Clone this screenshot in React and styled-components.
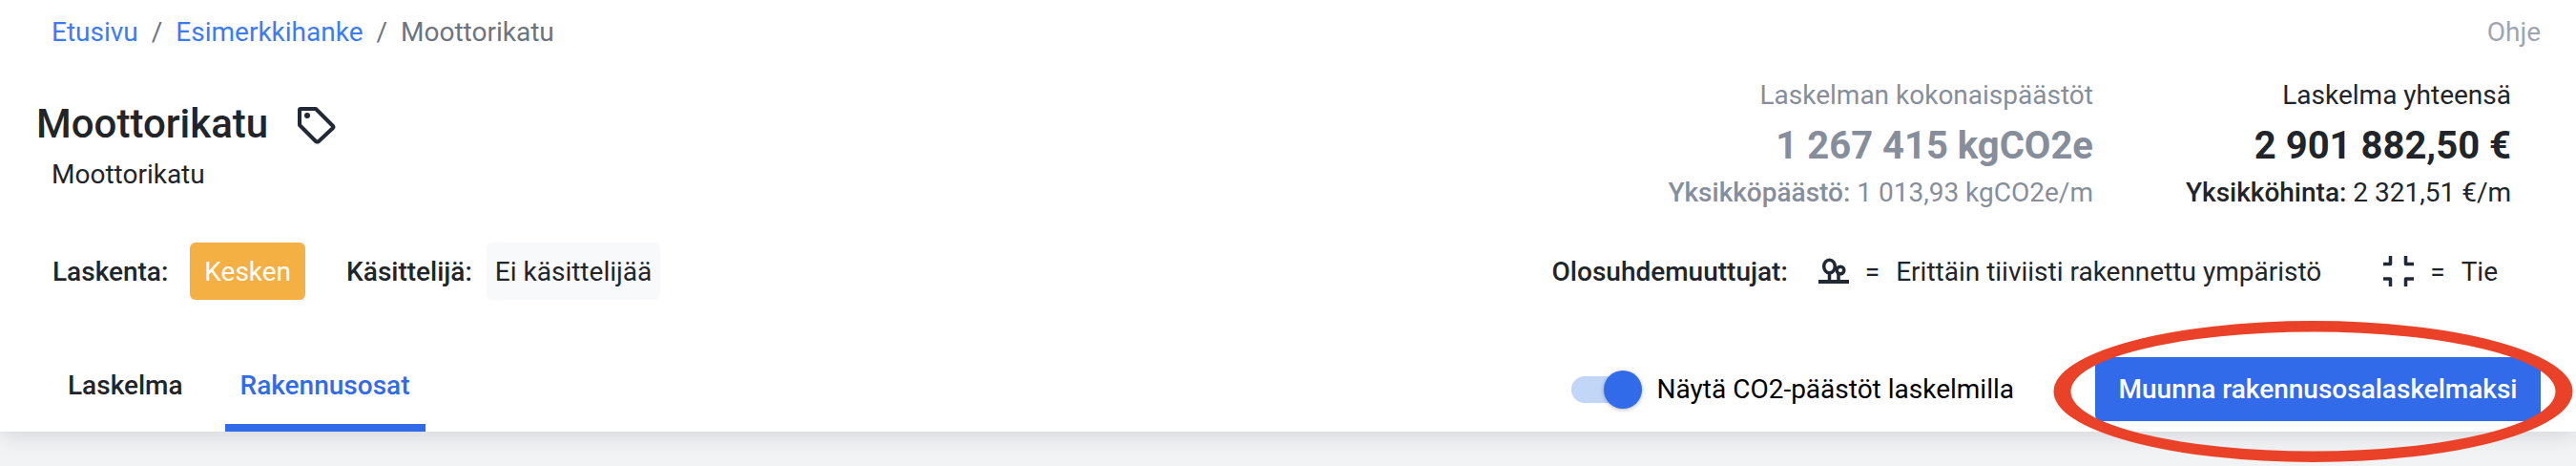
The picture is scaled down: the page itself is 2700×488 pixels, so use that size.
import React from 'react';
import styled, { createGlobalStyle } from 'styled-components';

const GlobalStyle = createGlobalStyle`
  html, body {
    margin: 0;
    padding: 0;
    background-color: #f2f3f5;
    font-family: Roboto, "Liberation Sans", sans-serif;
    color: #212529;
  }
`;

const Page = styled.div`
  position: relative;
  width: 2700px;
  height: 488px;
  overflow: hidden;
`;

const Header = styled.header`
  height: 452px;
  background-color: #fff;
  box-shadow: 0 2px 22px rgba(30, 35, 50, 0.16);
  display: flex;
  flex-direction: column;
`;

const TopBar = styled.div`
  height: 66px;
  padding: 0 37px 0 54px;
  display: flex;
  align-items: center;
  justify-content: space-between;
  font-size: 28px;
`;

const Crumbs = styled.nav`
  display: flex;
  align-items: center;
`;

const CrumbLink = styled.a`
  color: #3b7cf6;
`;

const CrumbSep = styled.span`
  color: #6c757d;
  padding: 0 14px;
`;

const CrumbCurrent = styled.span`
  color: #6c757d;
`;

const Help = styled.span`
  color: #9ea5b0;
`;

const Summary = styled.div`
  height: 174px;
  display: flex;
  justify-content: space-between;
  padding: 0 68px 0 38px;
`;

const TitleBlock = styled.div`
  padding-top: 40px;
`;

const TitleRow = styled.div`
  display: flex;
  align-items: center;
  gap: 29px;
  height: 48px;
`;

const Title = styled.h1`
  margin: 0;
  font-size: 42px;
  font-weight: 500;
  line-height: 48px;
`;

const Subtitle = styled.div`
  margin: 11px 0 0 16px;
  font-size: 28px;
  line-height: 36px;
`;

const Stats = styled.div`
  display: flex;
  gap: 97px;
  padding-top: 14px;
`;

const Stat = styled.div`
  display: flex;
  flex-direction: column;
  align-items: flex-end;
  color: ${(p) => (p.$muted ? '#868e9b' : '#212529')};
`;

const StatLabel = styled.div`
  font-size: 28px;
  line-height: 40px;
`;

const StatValue = styled.div`
  font-size: 40px;
  font-weight: 700;
  line-height: 52px;
  margin-top: 7px;
`;

const StatUnit = styled.div`
  font-size: 28px;
  line-height: 40px;
  margin-top: 3px;

  b {
    font-weight: 500;
  }
`;

const InfoRow = styled.div`
  height: 60px;
  margin-top: 14px;
  padding: 0 82px 0 55px;
  display: flex;
  align-items: center;
  justify-content: space-between;
  font-size: 28px;
`;

const InfoGroup = styled.div`
  display: flex;
  align-items: center;
`;

const FieldLabel = styled.span`
  font-weight: 500;
`;

const Badge = styled.span`
  height: 60px;
  padding: 0 15px;
  margin: 0 43px 0 23px;
  display: flex;
  align-items: center;
  border-radius: 6px;
  background-color: #f4b042;
  color: #fff;
`;

const HandlerChip = styled.span`
  height: 60px;
  padding: 0 9px;
  margin-left: 15px;
  display: flex;
  align-items: center;
  border-radius: 6px;
  background-color: #f8f9fa;
`;

const Condition = styled.span`
  display: flex;
  align-items: center;
  gap: 17px;
  margin-left: ${(p) => p.$gap}px;
`;

const BottomRow = styled.div`
  flex: 1;
  display: flex;
  align-items: flex-end;
  justify-content: space-between;
  padding: 0 37px 0 36px;
`;

const Tabs = styled.div`
  display: flex;
`;

const Tab = styled.div`
  height: 75px;
  box-sizing: border-box;
  padding: 0 ${(p) => (p.$active ? 16 : 35)}px 15px;
  margin-right: ${(p) => (p.$active ? 0 : 9)}px;
  display: flex;
  align-items: center;
  font-size: 28px;
  font-weight: 500;
  color: ${(p) => (p.$active ? '#316bea' : '#212529')};
  border-bottom: 8px solid ${(p) => (p.$active ? '#316bea' : 'transparent')};
`;

const Actions = styled.div`
  display: flex;
  align-items: center;
  padding-bottom: 11px;
`;

const Toggle = styled.span`
  position: relative;
  width: 74px;
  height: 28px;
  border-radius: 14px;
  background-color: #c2d6f8;
  margin-right: 16px;
`;

const ToggleThumb = styled.span`
  position: absolute;
  right: 0;
  top: -6px;
  width: 40px;
  height: 40px;
  border-radius: 50%;
  background-color: #316bea;
  box-shadow: 0 1px 4px rgba(0, 0, 0, 0.3);
`;

const ToggleLabel = styled.span`
  font-size: 28px;
  color: #000;
  margin-right: 85px;
`;

const PrimaryButton = styled.button`
  width: 467px;
  height: 67px;
  border: none;
  border-radius: 6px;
  background-color: #316bea;
  color: #fff;
  font-family: inherit;
  font-size: 28px;
  font-weight: 500;
`;

const Highlight = styled.svg`
  position: absolute;
  left: 2150px;
  top: 332px;
`;

const TagIcon = () => (
  <svg width="42" height="42" viewBox="0 0 42 42" fill="none" stroke="#212934" strokeWidth="4" strokeLinejoin="round">
    <path d="M5 5 H21 L39 23 Q40 24 39 25 L24 39 Q22.5 40 21 39 L4 22 V6 Q4 5 5 5 Z" />
    <circle cx="12" cy="12" r="3" fill="#212934" stroke="none" />
  </svg>
);

const TreesIcon = () => (
  <svg width="32" height="34" viewBox="0 0 32 34" fill="none" stroke="#212934" strokeWidth="3.5">
    <ellipse cx="11.5" cy="12" rx="5.8" ry="6.8" />
    <circle cx="23" cy="16" r="3.8" />
    <path d="M11.5 19 V27 M21 20 V27" />
    <path d="M0 28 H32" strokeWidth="4" />
  </svg>
);

const RoadIcon = () => (
  <svg width="32" height="32" viewBox="0 0 32 32" fill="none" stroke="#212934" strokeWidth="3.5" strokeLinejoin="round">
    <path d="M7.5 0 V8.5 H0 M23.5 0 V8.5 H32 M0 24 H7.5 V32 M32 24 H23.5 V32" />
  </svg>
);

const App = () => (
  <Page>
    <GlobalStyle />
    <Header>
      <TopBar>
        <Crumbs>
          <CrumbLink>Etusivu</CrumbLink>
          <CrumbSep>/</CrumbSep>
          <CrumbLink>Esimerkkihanke</CrumbLink>
          <CrumbSep>/</CrumbSep>
          <CrumbCurrent>Moottorikatu</CrumbCurrent>
        </Crumbs>
        <Help>Ohje</Help>
      </TopBar>
      <Summary>
        <TitleBlock>
          <TitleRow>
            <Title>Moottorikatu</Title>
            <TagIcon />
          </TitleRow>
          <Subtitle>Moottorikatu</Subtitle>
        </TitleBlock>
        <Stats>
          <Stat $muted>
            <StatLabel>Laskelman kokonaispäästöt</StatLabel>
            <StatValue>1 267 415 kgCO2e</StatValue>
            <StatUnit><b>Yksikköpäästö:</b> 1 013,93 kgCO2e/m</StatUnit>
          </Stat>
          <Stat>
            <StatLabel>Laskelma yhteensä</StatLabel>
            <StatValue>2 901 882,50 €</StatValue>
            <StatUnit><b>Yksikköhinta:</b> 2 321,51 €/m</StatUnit>
          </Stat>
        </Stats>
      </Summary>
      <InfoRow>
        <InfoGroup>
          <FieldLabel>Laskenta:</FieldLabel>
          <Badge>Kesken</Badge>
          <FieldLabel>Käsittelijä:</FieldLabel>
          <HandlerChip>Ei käsittelijää</HandlerChip>
        </InfoGroup>
        <InfoGroup>
          <FieldLabel>Olosuhdemuuttujat:</FieldLabel>
          <Condition $gap={32}>
            <TreesIcon />
            <span>=</span>
            <span>Erittäin tiiviisti rakennettu ympäristö</span>
          </Condition>
          <Condition $gap={65}>
            <RoadIcon />
            <span>=</span>
            <span>Tie</span>
          </Condition>
        </InfoGroup>
      </InfoRow>
      <BottomRow>
        <Tabs>
          <Tab>Laskelma</Tab>
          <Tab $active>Rakennusosat</Tab>
        </Tabs>
        <Actions>
          <Toggle><ToggleThumb /></Toggle>
          <ToggleLabel>Näytä CO2-päästöt laskelmilla</ToggleLabel>
          <PrimaryButton>Muunna rakennusosalaskelmaksi</PrimaryButton>
        </Actions>
      </BottomRow>
    </Header>
    <Highlight width="550" height="156" viewBox="0 0 550 156">
      <path
        fillRule="evenodd"
        fill="#ea4228"
        d="M2.5 78 A272 74 0 1 1 546.5 78 A272 74 0 1 1 2.5 78 Z
           M20.5 78 A254 62.5 0 1 0 528.5 78 A254 62.5 0 1 0 20.5 78 Z"
      />
    </Highlight>
  </Page>
);

export default App;
